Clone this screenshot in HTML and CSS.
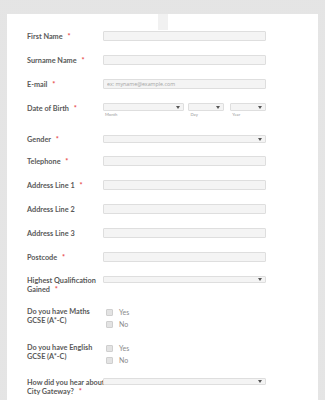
FILE: index.html
```html
<!DOCTYPE html>
<html lang="en">
<head>
    <meta charset="UTF-8">
    <meta name="viewport" content="width=device-width, initial-scale=1.0">
    <title>Application Form</title>
    <link rel="stylesheet" href="styles.css">
</head>
<body>
    <div class="form-card">
        <div class="form-tab"></div>
        <ul class="form-list">
            <li class="form-line">
                <label class="form-label">First Name <span class="required">*</span></label>
                <div class="form-input"><input type="text" class="textbox"></div>
            </li>
            <li class="form-line">
                <label class="form-label">Surname Name <span class="required">*</span></label>
                <div class="form-input"><input type="text" class="textbox"></div>
            </li>
            <li class="form-line">
                <label class="form-label">E-mail <span class="required">*</span></label>
                <div class="form-input"><input type="text" class="textbox" placeholder="ex: myname@example.com"></div>
            </li>
            <li class="form-line line-date">
                <label class="form-label">Date of Birth <span class="required">*</span></label>
                <div class="form-input date-group">
                    <div class="date-part part-month">
                        <div class="dropdown"><svg class="arrow" viewBox="0 0 4 3"><path d="M0 0h4L2 3z"/></svg></div>
                        <span class="sublabel">Month</span>
                    </div>
                    <div class="date-part part-day">
                        <div class="dropdown"><svg class="arrow" viewBox="0 0 4 3"><path d="M0 0h4L2 3z"/></svg></div>
                        <span class="sublabel">Day</span>
                    </div>
                    <div class="date-part part-year">
                        <div class="dropdown"><svg class="arrow" viewBox="0 0 4 3"><path d="M0 0h4L2 3z"/></svg></div>
                        <span class="sublabel">Year</span>
                    </div>
                </div>
            </li>
            <li class="form-line line-select">
                <label class="form-label">Gender <span class="required">*</span></label>
                <div class="form-input"><div class="dropdown"><svg class="arrow" viewBox="0 0 4 3"><path d="M0 0h4L2 3z"/></svg></div></div>
            </li>
            <li class="form-line">
                <label class="form-label">Telephone <span class="required">*</span></label>
                <div class="form-input"><input type="text" class="textbox"></div>
            </li>
            <li class="form-line">
                <label class="form-label">Address Line 1 <span class="required">*</span></label>
                <div class="form-input"><input type="text" class="textbox"></div>
            </li>
            <li class="form-line">
                <label class="form-label">Address Line 2</label>
                <div class="form-input"><input type="text" class="textbox"></div>
            </li>
            <li class="form-line">
                <label class="form-label">Address Line 3</label>
                <div class="form-input"><input type="text" class="textbox"></div>
            </li>
            <li class="form-line">
                <label class="form-label">Postcode <span class="required">*</span></label>
                <div class="form-input"><input type="text" class="textbox"></div>
            </li>
            <li class="form-line line-select">
                <label class="form-label">Highest Qualification Gained <span class="required">*</span></label>
                <div class="form-input"><div class="dropdown small"><svg class="arrow" viewBox="0 0 4 3"><path d="M0 0h4L2 3z"/></svg></div></div>
            </li>
            <li class="form-line line-check">
                <label class="form-label">Do you have Maths GCSE (A*-C)</label>
                <div class="form-input options">
                    <span class="option"><span class="checkbox"></span>Yes</span>
                    <span class="option"><span class="checkbox"></span>No</span>
                </div>
            </li>
            <li class="form-line line-check">
                <label class="form-label">Do you have English GCSE (A*-C)</label>
                <div class="form-input options">
                    <span class="option"><span class="checkbox"></span>Yes</span>
                    <span class="option"><span class="checkbox"></span>No</span>
                </div>
            </li>
            <li class="form-line line-select">
                <label class="form-label">How did you hear about City Gateway? <span class="required">*</span></label>
                <div class="form-input"><div class="dropdown small"><svg class="arrow" viewBox="0 0 4 3"><path d="M0 0h4L2 3z"/></svg></div></div>
            </li>
        </ul>
    </div>
</body>
</html>
```

FILE: styles.css
```css
body {
    margin: 0;
    padding: 14px 7px 0 7px;
    font-family: Lato, 'Open Sans', sans-serif;
    background-color: #fafafa;
    background-image: radial-gradient(#e3e3e3 0.7px, transparent 0.8px);
    background-size: 2px 2px;
    height: 400px;
    box-sizing: border-box;
    overflow: hidden;
}

.form-card {
    background-color: white;
    width: 311px;
    min-height: 420px;
}

.form-tab {
    width: 10px;
    height: 16px;
    margin: 0 auto 1px;
    background-color: #f1f1f1;
}

.form-list {
    list-style: none;
    margin: 0;
    padding: 0 0 0 20px;
}

.form-line {
    display: flex;
    align-items: flex-start;
    margin-bottom: 14px;
}

.form-label {
    width: 78px;
    margin-right: -2px;
    flex-shrink: 0;
    font-size: 7.3px;
    line-height: 9px;
    font-weight: bold;
    color: #595959;
    padding-top: 1px;
}

.required {
    color: #e84c4c;
    margin-left: 3px;
}

.form-input {
    width: 163px;
}

.textbox {
    display: block;
    box-sizing: border-box;
    width: 163px;
    height: 10px;
    margin: 0;
    padding: 0 0 0 3px;
    border: 1px solid #dedede;
    border-radius: 1px;
    background-color: #f4f4f4;
    font-family: 'Open Sans', sans-serif;
    font-size: 5.3px;
    color: #999;
    outline: none;
}

.textbox::placeholder {
    color: #a4a4a4;
}

.dropdown {
    position: relative;
    box-sizing: border-box;
    height: 8px;
    border: 1px solid #dedede;
    border-radius: 1px;
    background-color: #f4f4f4;
}

.dropdown.small {
    height: 7px;
}

.arrow {
    position: absolute;
    right: 3px;
    top: 50%;
    width: 4px;
    height: 3px;
    margin-top: -1.5px;
    fill: #555;
}

.line-date {
    margin-bottom: 18px;
}

.date-group {
    display: flex;
    gap: 4px;
}

.part-month {
    width: 82px;
}

.part-day {
    width: 36px;
    margin-right: 2px;
}

.part-year {
    width: 36px;
    margin-left: auto;
}

.sublabel {
    display: block;
    font-size: 4.2px;
    line-height: 5px;
    color: #999;
    padding-left: 2px;
    margin-top: 1px;
}

.line-select {
    margin-bottom: 12px;
}

.line-select .form-label {
    padding-top: 0;
}

.line-select + .line-check {
    margin-top: 2px;
}

.line-check {
    margin-bottom: 12px;
}

.options {
    display: flex;
    flex-direction: column;
}

.option {
    display: flex;
    align-items: center;
    height: 12px;
    font-size: 7px;
    color: #8a8a8a;
}

.checkbox {
    width: 5px;
    height: 5px;
    margin: 0 6px 0 3px;
    border: 0.5px solid #cfcfcf;
    background-color: #e3e3e3;
    border-radius: 1px;
}
```
